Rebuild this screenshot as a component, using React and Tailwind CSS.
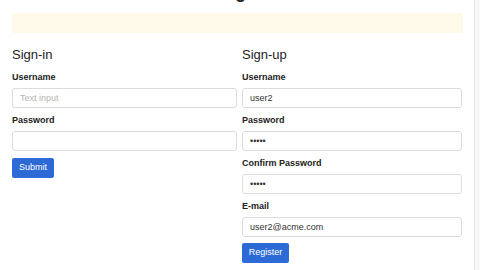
export default function App() {
  const label = "block text-[9px] font-bold text-[#222] leading-[11px] mb-[5px]";
  const input =
    "block w-full h-[20px] border border-[#dcdcdc] rounded-[3px] bg-white px-[7px] text-[9px] text-[#333] placeholder:text-[#b5b5b5] outline-none";

  return (
    <div className="flex h-[270px] overflow-hidden bg-white" style={{ fontFamily: '"Liberation Sans", Arial, sans-serif' }}>
      <main className="flex-1 pl-3 pr-[11px]">
        {/* heading scrolled mostly out of view */}
        <h1 className="-mt-[20px] h-[24px] text-center text-lg font-bold leading-[24px] text-[#222]">Login</h1>
        <div className="mt-[9px] h-[20px] bg-[#fef9e8]"></div>

        <div className="mt-[14px] grid grid-cols-[225px_220px] gap-[5px]">
          {/* Sign-in */}
          <div>
            <h2 className="text-[13px] leading-[16px] text-[#222] mb-[9px]">Sign-in</h2>
            <label className={label}>Username</label>
            <input className={input} placeholder="Text input" />
            <label className={label + " mt-[7px]"}>Password</label>
            <input className={input} type="password" />
            <button className="mt-[7px] h-[20px] w-[42px] rounded-[2px] bg-[#2c6ad6] text-[9px] text-white">Submit</button>
          </div>

          {/* Sign-up */}
          <div>
            <h2 className="text-[13px] leading-[16px] text-[#222] mb-[9px]">Sign-up</h2>
            <label className={label}>Username</label>
            <input className={input} defaultValue="user2" />
            <label className={label + " mt-[7px]"}>Password</label>
            <input className={input} type="password" defaultValue="abcde" />
            <label className={label + " mt-[7px]"}>Confirm Password</label>
            <input className={input} type="password" defaultValue="abcde" />
            <label className={label + " mt-[7px]"}>E-mail</label>
            <input className={input} defaultValue="user2@acme.com" />
            <button className="mt-[6px] h-[20px] w-[47px] rounded-[2px] bg-[#2c6ad6] text-[9px] text-white">Register</button>
          </div>
        </div>
      </main>
      <div className="w-[6px] border-l border-[#e6e6e6] bg-[#f7f7f7]"></div>
    </div>
  );
}
